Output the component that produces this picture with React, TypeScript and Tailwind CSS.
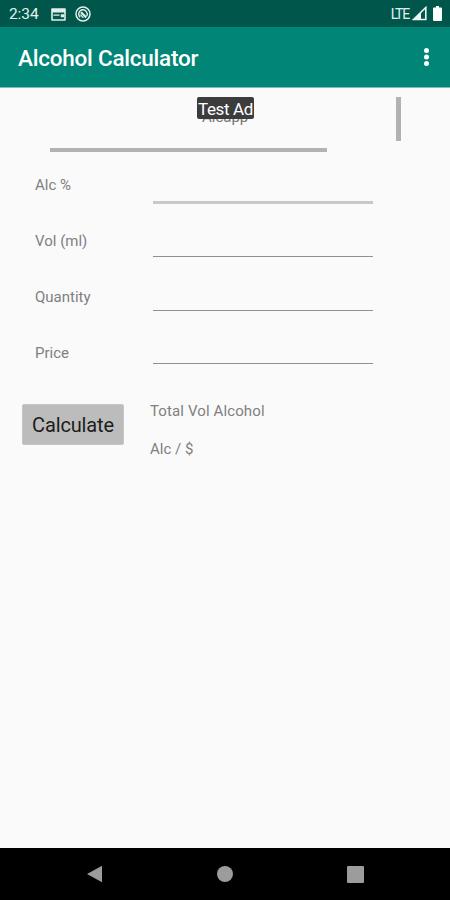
import React from 'react';

interface Field {
    label: string;
    inputClass: string;
}

const FIELDS: Field[] = [
    { label: 'Alc %', inputClass: 'h-[47px] border-b-[3px] border-[#c8c8c8]' },
    { label: 'Vol (ml)', inputClass: 'h-11 border-b border-[#8f8f8f]' },
    { label: 'Quantity', inputClass: 'h-[42px] border-b border-[#8f8f8f]' },
    { label: 'Price', inputClass: 'h-[39px] border-b border-[#8f8f8f]' },
];

const NewsIcon: React.FC = () => (
    <svg className="ml-[13px] mt-[1px] h-[13px] w-[15px]" viewBox="0 0 15 13" fill="none">
        <path d="M1 1h13v11H1z" stroke="#e3efed" strokeWidth="1.6" strokeLinejoin="round" />
        <path d="M1 1h13v3.4H1zM2.500 6.600h6v1.200h-6zM9.800 6.200H13v3h-3.200z" fill="#e3efed" />
    </svg>
);

const SyncIcon: React.FC = () => (
    <svg className="ml-[9px] h-4 w-4" viewBox="0 0 16 16" fill="none" stroke="#e3efed">
        <circle cx="8" cy="8" r="7" strokeWidth="1.5" />
        <path d="M5.200 11.200A4.200 4.200 0 0 1 5 5a4.200 4.200 0 0 1 6.400.600 4.200 4.200 0 0 1 .400 4.400" strokeWidth="1.400" />
        <path d="M6 6.300l5.200 5.200" strokeWidth="2.200" />
        <path d="M5.400 8.600l3 3.200" strokeWidth="1.200" />
    </svg>
);

const StatusBar: React.FC = () => (
    <div className="flex h-[27px] shrink-0 items-center bg-[#00564a] pl-[9px] pr-2 text-[#e6f1ef]">
        <span className="w-[29px] whitespace-nowrap pt-[2px] text-[15.5px] leading-none tracking-[-0.1px]">2:34</span>
        <NewsIcon />
        <SyncIcon />
        <span className="ml-auto whitespace-nowrap text-[14px] leading-none tracking-[-1.2px]">LTE</span>
        <svg className="ml-[3px] h-[15px] w-[15px]" viewBox="0 0 15 15">
            <path d="M1.5 13.5L13.8 1.5v12z" fill="none" stroke="#eef6f4" strokeWidth="1.6" />
            <path d="M1 14L9 6.2V14z" fill="#eef6f4" />
        </svg>
        <svg className="ml-[6px] h-[15px] w-[9px]" viewBox="0 0 9 15">
            <path d="M3 0h3v1.5h2q1 0 1 1V14q0 1-1 1H1q-1 0-1-1V2.500q0-1 1-1h2z" fill="#fff" />
        </svg>
    </div>
);

const AppBar: React.FC = () => (
    <header className="flex h-[61px] shrink-0 items-center justify-between border-b border-[#7dbdb4] bg-[#008577] pl-[18px] pr-5 text-white">
        <h1 className="whitespace-nowrap pt-[3px] text-[22.5px] font-medium leading-none tracking-[-0.23px]">Alcohol Calculator</h1>
        <svg className="h-5 w-[7px]" viewBox="0 0 7 20" fill="currentColor">
            <circle cx="3.500" cy="3.500" r="2.500" />
            <circle cx="3.500" cy="10" r="2.500" />
            <circle cx="3.500" cy="16.500" r="2.500" />
        </svg>
    </header>
);

const AdBanner: React.FC = () => (
    <div className="flex h-[69px] pl-[50px] pt-[9px]">
        <div className="relative h-[55px] w-[277px] border-b-4 border-[#b2b2b2]">
            <span className="absolute left-[152px] top-[11px] text-[15px] leading-[18px] text-[#777777]">Alcapp</span>
            <span className="absolute left-[147px] top-0 flex h-[22px] w-[57px] items-center justify-center whitespace-nowrap rounded-[2px] bg-[#3c3c3c] pt-[2px] text-[17px] leading-none tracking-[-0.35px] text-white">
                Test Ad
            </span>
        </div>
        <div className="ml-[69px] h-11 w-[5px] bg-[#b2b2b2]" />
    </div>
);

const NavBar: React.FC = () => (
    <nav className="flex h-[52px] shrink-0 items-center justify-between bg-black px-[86px]">
        <svg className="h-[18px] w-[17px]" viewBox="0 0 17 18">
            <path d="M1 9L16 .8v16.400z" fill="#9c9c9c" />
        </svg>
        <div className="h-4 w-4 rounded-full bg-[#9c9c9c]" />
        <div className="h-[17px] w-[17px] rounded-[1px] bg-[#9c9c9c]" />
    </nav>
);

const App: React.FC = () => {
    return (
        <div className="flex h-screen w-full flex-col overflow-hidden bg-[#fafafa] font-[Roboto,sans-serif]">
            <StatusBar />
            <AppBar />
            <main className="flex-1">
                <AdBanner />
                {FIELDS.map(field => (
                    <label key={field.label} className="flex h-14 pl-[35px]">
                        <span className="w-[118px] pt-[18px] text-[15px] leading-5 text-[#808080]">{field.label}</span>
                        <input type="text" className={`w-[220px] bg-transparent outline-none ${field.inputClass}`} />
                    </label>
                ))}
                <div className="flex pl-[22px] pt-[23px]">
                    <button className="h-[41px] w-[102px] whitespace-nowrap rounded-[2px] border border-[#c6c6c6] bg-[#bcbcbc] text-[20px] leading-none tracking-[-0.15px] text-[#1c1c1c]">
                        Calculate
                    </button>
                    <div className="-mt-[3px] ml-[26px] flex flex-col gap-[18px] whitespace-nowrap text-[15px] leading-5 text-[#808080]">
                        <p className="tracking-[0.12px]">Total Vol Alcohol</p>
                        <p>Alc / $</p>
                    </div>
                </div>
            </main>
            <NavBar />
        </div>
    );
};

export default App;
